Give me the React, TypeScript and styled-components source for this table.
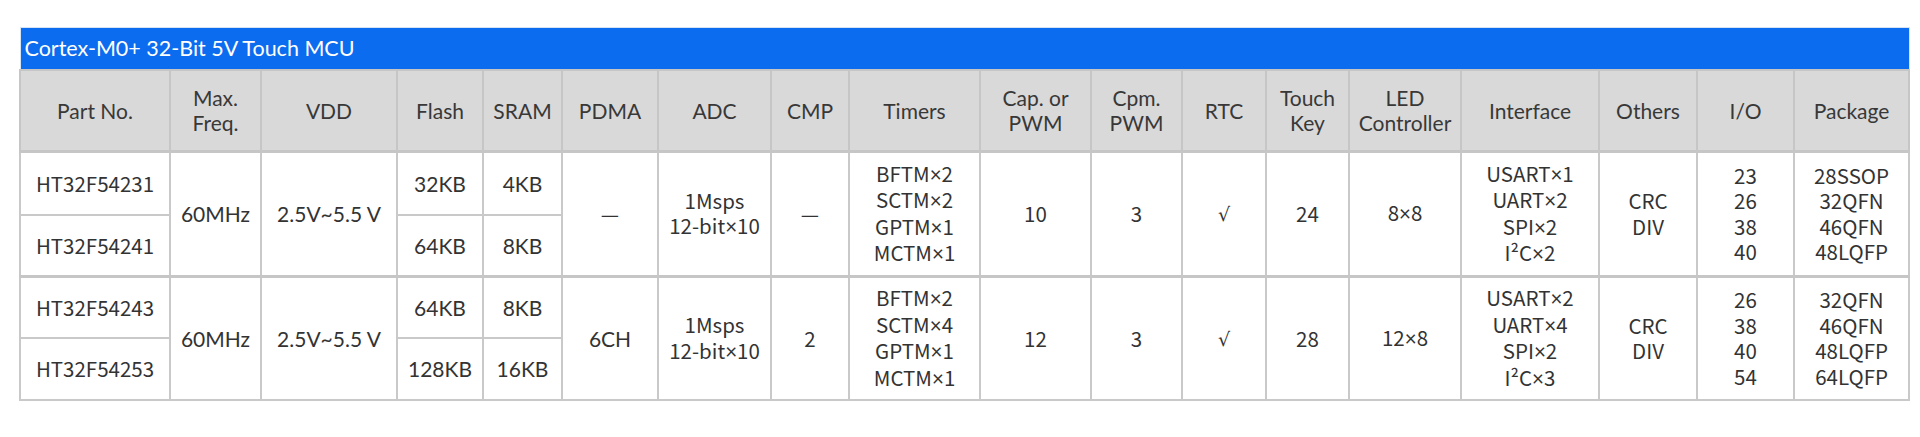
import React from "react";
import styled, { createGlobalStyle } from "styled-components";

const Global = createGlobalStyle`
  html, body { margin: 0; padding: 0; background: #ffffff; }
  body { font-family: Lato, "Noto Sans", sans-serif; }
`;

const Page = styled.div`
  padding: 27px 12px 0 19px;
`;

const Table = styled.table`
  width: 1889px;
  table-layout: fixed;
  border-collapse: collapse;
  font-family: Lato, "Noto Sans", sans-serif;
  color: #333333;
  font-size: 21px;
  line-height: 25.5px;
`;

const TitleCell = styled.th`
  height: 41px;
  padding: 0 0 0 4px;
  background: #0b6cf0;
  color: #ffffff;
  font-weight: 400;
  font-size: 21.5px;
  text-align: left;
  border: 1px solid #d6e3f2;
`;

const HeadRow = styled.tr`
  height: 81px;
  border-bottom: 3px solid #c6c6c6;
`;

const Th = styled.th`
  background: #d9d9d9;
  font-weight: 400;
  text-align: center;
  padding: 0 4px;
  border: 2px solid #c6c6c6;
  border-bottom-width: 3px;
  color: #383838;
`;

const Tbody = styled.tbody`
  border-top: 3px solid #c6c6c6;
`;

const Tr = styled.tr<{ $h: number }>`
  height: ${(p) => p.$h}px;
`;

const Td = styled.td<{ $cjk?: boolean }>`
  text-align: center;
  vertical-align: middle;
  padding: 0 4px;
  border: 2px solid #c9c9c9;
  background: #ffffff;
  font-family: ${(p) =>
    p.$cjk ? `"Noto Sans CJK SC", "Noto Sans", sans-serif` : `Lato, "Noto Sans", sans-serif`};
  font-size: ${(p) => (p.$cjk ? "20.5px" : "21px")};
  color: #333333;
`;

const Sym = styled.span<{ $root?: boolean }>`
  font-family: ${(p) => (p.$root ? `"DejaVu Sans", sans-serif` : `Lato, sans-serif`)};
  font-size: ${(p) => (p.$root ? "19px" : "inherit")};
`;

const widths = [150, 91, 136, 86, 79, 96, 113, 78, 131, 111, 91, 84, 83, 112, 138, 98, 97, 115];

const headers: string[][] = [
  ["Part No."],
  ["Max.", "Freq."],
  ["VDD"],
  ["Flash"],
  ["SRAM"],
  ["PDMA"],
  ["ADC"],
  ["CMP"],
  ["Timers"],
  ["Cap. or", "PWM"],
  ["Cpm.", "PWM"],
  ["RTC"],
  ["Touch", "Key"],
  ["LED", "Controller"],
  ["Interface"],
  ["Others"],
  ["I/O"],
  ["Package"],
];

type Shared = { lines: string[]; cjk?: boolean };

type Group = {
  parts: [string, string];
  flash: [string, string];
  sram: [string, string];
  heights: [number, number];
  shared1: Shared[];
  shared2: Shared[];
};

const groups: Group[] = [
  {
    parts: ["HT32F54231", "HT32F54241"],
    flash: ["32KB", "64KB"],
    sram: ["4KB", "8KB"],
    heights: [64, 61],
    shared1: [{ lines: ["60MHz"] }, { lines: ["2.5V~5.5 V"] }],
    shared2: [
      { lines: ["—"], cjk: true },
      { lines: ["1Msps", "12-bit×10"], cjk: true },
      { lines: ["—"], cjk: true },
      { lines: ["BFTM×2", "SCTM×2", "GPTM×1", "MCTM×1"], cjk: true },
      { lines: ["10"], cjk: true },
      { lines: ["3"], cjk: true },
      { lines: ["√"], cjk: true },
      { lines: ["24"], cjk: true },
      { lines: ["8×8"], cjk: true },
      { lines: ["USART×1", "UART×2", "SPI×2", "I²C×2"], cjk: true },
      { lines: ["CRC", "DIV"], cjk: true },
      { lines: ["23", "26", "38", "40"], cjk: true },
      { lines: ["28SSOP", "32QFN", "46QFN", "48LQFP"], cjk: true },
    ],
  },
  {
    parts: ["HT32F54243", "HT32F54253"],
    flash: ["64KB", "128KB"],
    sram: ["8KB", "16KB"],
    heights: [62, 62],
    shared1: [{ lines: ["60MHz"] }, { lines: ["2.5V~5.5 V"] }],
    shared2: [
      { lines: ["6CH"] },
      { lines: ["1Msps", "12-bit×10"], cjk: true },
      { lines: ["2"], cjk: true },
      { lines: ["BFTM×2", "SCTM×4", "GPTM×1", "MCTM×1"], cjk: true },
      { lines: ["12"], cjk: true },
      { lines: ["3"], cjk: true },
      { lines: ["√"], cjk: true },
      { lines: ["28"], cjk: true },
      { lines: ["12×8"], cjk: true },
      { lines: ["USART×2", "UART×4", "SPI×2", "I²C×3"], cjk: true },
      { lines: ["CRC", "DIV"], cjk: true },
      { lines: ["26", "38", "40", "54"], cjk: true },
      { lines: ["32QFN", "46QFN", "48LQFP", "64LQFP"], cjk: true },
    ],
  },
];

const Text: React.FC<{ s: string }> = ({ s }) => (
  <>
    {s.split(/([×√])/).map((part, i) =>
      part === "×" ? (
        <Sym key={i}>×</Sym>
      ) : part === "√" ? (
        <Sym key={i} $root>
          √
        </Sym>
      ) : (
        <React.Fragment key={i}>{part}</React.Fragment>
      )
    )}
  </>
);

const Lines: React.FC<{ lines: string[] }> = ({ lines }) => (
  <>
    {lines.map((l, i) => (
      <React.Fragment key={i}>
        {i > 0 && <br />}
        <Text s={l} />
      </React.Fragment>
    ))}
  </>
);

export default function App() {
  return (
    <>
      <Global />
      <Page>
        <Table>
          <colgroup>
            {widths.map((w, i) => (
              <col key={i} style={{ width: w }} />
            ))}
          </colgroup>
          <thead>
            <tr>
              <TitleCell colSpan={18}>Cortex-M0+ 32-Bit 5V Touch MCU</TitleCell>
            </tr>
            <HeadRow>
              {headers.map((h, i) => (
                <Th key={i}>
                  <Lines lines={h} />
                </Th>
              ))}
            </HeadRow>
          </thead>
          {groups.map((g, gi) => (
            <Tbody key={gi}>
              <Tr $h={g.heights[0]}>
                <Td $cjk>{g.parts[0]}</Td>
                {g.shared1.map((s, i) => (
                  <Td key={`a${i}`} rowSpan={2} $cjk={s.cjk}>
                    <Lines lines={s.lines} />
                  </Td>
                ))}
                <Td>{g.flash[0]}</Td>
                <Td>{g.sram[0]}</Td>
                {g.shared2.map((s, i) => (
                  <Td key={`b${i}`} rowSpan={2} $cjk={s.cjk}>
                    <Lines lines={s.lines} />
                  </Td>
                ))}
              </Tr>
              <Tr $h={g.heights[1]}>
                <Td $cjk>{g.parts[1]}</Td>
                <Td>{g.flash[1]}</Td>
                <Td>{g.sram[1]}</Td>
              </Tr>
            </Tbody>
          ))}
        </Table>
      </Page>
    </>
  );
}
